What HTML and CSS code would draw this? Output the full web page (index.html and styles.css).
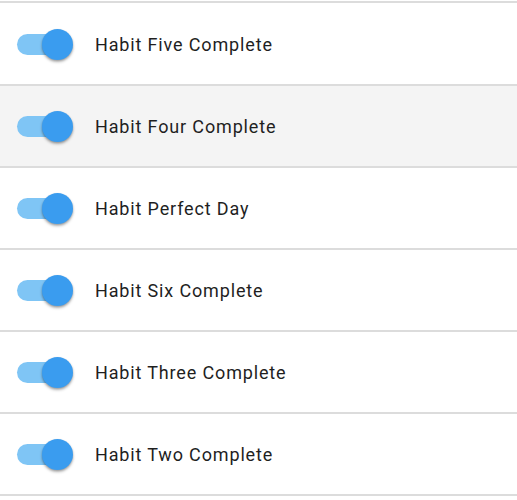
FILE: index.html
```
<!DOCTYPE html>
<html>
<head>
<meta charset="utf-8">
<link rel="stylesheet" href="styles.css">
</head>
<body>
<ul class="list">
  <li class="item"><span class="switch"><span class="track"></span><span class="thumb"></span></span><span class="label">Habit Five Complete</span></li>
  <li class="item hover"><span class="switch"><span class="track"></span><span class="thumb"></span></span><span class="label">Habit Four Complete</span></li>
  <li class="item"><span class="switch"><span class="track"></span><span class="thumb"></span></span><span class="label">Habit Perfect Day</span></li>
  <li class="item"><span class="switch"><span class="track"></span><span class="thumb"></span></span><span class="label">Habit Six Complete</span></li>
  <li class="item"><span class="switch"><span class="track"></span><span class="thumb"></span></span><span class="label">Habit Three Complete</span></li>
  <li class="item"><span class="switch"><span class="track"></span><span class="thumb"></span></span><span class="label">Habit Two Complete</span></li>
</ul>
</body>
</html>
```
FILE: styles.css
```
html, body {
  margin: 0;
  padding: 0;
  background: #ffffff;
}
body {
  padding-top: 1px;
  font-family: Roboto, "Liberation Sans", sans-serif;
}
.list {
  list-style: none;
  margin: 0;
  padding: 1px 0 0 0;
  border-top: 2px solid #dcdcdc;
}
.item {
  height: 79px;
  border-bottom: 2px solid #dcdcdc;
  display: flex;
  align-items: center;
  padding-left: 17px;
  padding-top: 1px;
  box-sizing: content-box;
  background: #ffffff;
}
.item.hover {
  background: #f4f4f4;
}
.switch {
  position: relative;
  width: 57px;
  height: 32px;
  display: flex;
  align-items: center;
  flex-shrink: 0;
}
.track {
  width: 45px;
  height: 21px;
  border-radius: 11px;
  background: #7fc5f5;
}
.thumb {
  position: absolute;
  left: 25px;
  top: 0;
  width: 31px;
  height: 31px;
  border-radius: 50%;
  background: #3a9cef;
  box-shadow: 0 2px 3px rgba(0,0,0,0.28), 0 1px 2px rgba(0,0,0,0.16);
}
.label {
  margin-left: 21px;
  font-size: 18px;
  color: #1f1f1f;
  letter-spacing: 0.85px;
}
```
